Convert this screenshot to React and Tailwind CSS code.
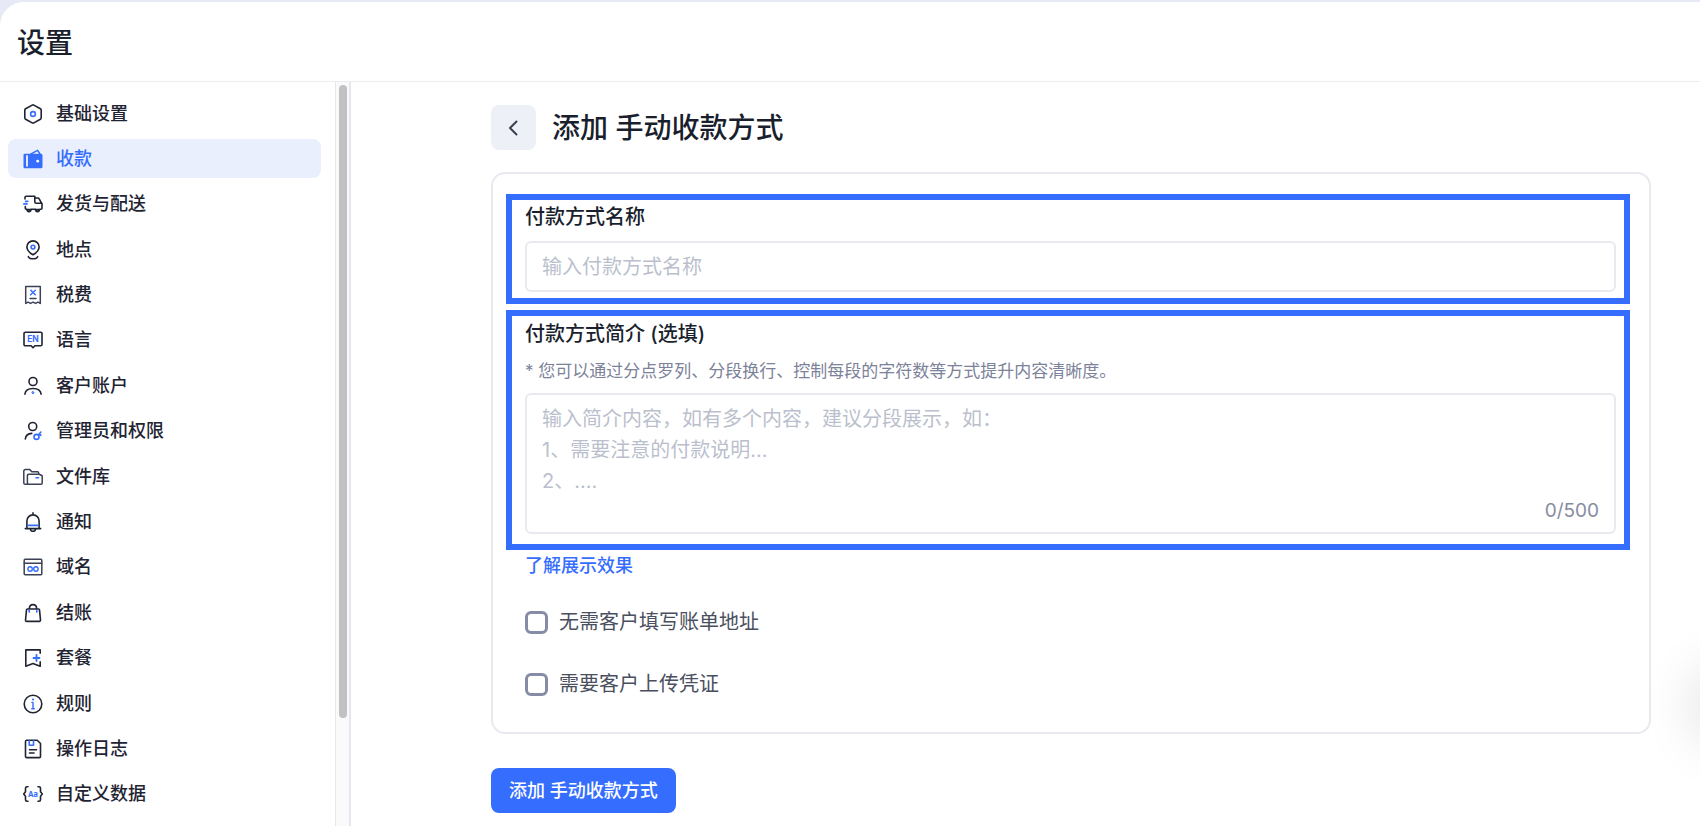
import React, { useState } from "react";

const INK = "#1f2433";
const BLUE = "#356dff";

function Icon({ children }) {
  return (
    <svg
      viewBox="0 0 20 20"
      className="size-5 shrink-0"
      fill="none"
      stroke={INK}
      strokeWidth="1.6"
      strokeLinecap="round"
      strokeLinejoin="round"
      aria-hidden="true"
    >
      {children}
    </svg>
  );
}

const items = [
  {
    label: "基础设置",
    icon: (
      <>
        <path d="M9.2 1.1a1.6 1.6 0 0 1 1.6 0l6.6 3.7a1.6 1.6 0 0 1 .8 1.4v7.6a1.6 1.6 0 0 1-.8 1.4l-6.6 3.7a1.6 1.6 0 0 1-1.6 0l-6.6-3.7a1.6 1.6 0 0 1-.8-1.4V6.2a1.6 1.6 0 0 1 .8-1.4z" />
        <circle cx="10" cy="10" r="2.4" stroke={BLUE} />
      </>
    ),
  },
  {
    label: "收款",
    active: true,
    icon: (
      <>
        <path d="M8 4.8 14.6 1.400 17 5" stroke={BLUE} strokeWidth="1.5" />
        <path d="M1.800 4.800h16.200a1.500 1.500 0 0 1 1.500 1.500v11.400a1.500 1.500 0 0 1-1.500 1.500H1.800A1.300 1.300 0 0 1 .5 17.900V6.100a1.300 1.300 0 0 1 1.300-1.300z" fill={BLUE} stroke="none" />
        <path d="M4 6.300v11.200" stroke="#fff" strokeWidth="1.700" strokeLinecap="butt" />
        <circle cx="14.700" cy="12.200" r="1.400" fill="#fff" stroke="none" />
      </>
    ),
  },
  {
    label: "发货与配送",
    icon: (
      <>
        <path d="M2 5V3.500A1.300 1.300 0 0 1 3.300 2.200h8.500v5.600a1.400 1.400 0 0 0 1.400 1.400H18M11.800 4h3a1.600 1.600 0 0 1 1.400.9l1.900 3.500.6.600a1 1 0 0 1 .3.700v4.600a1 1 0 0 1-1 1h-1M8.300 15.300h4M2.300 12.500v1.800a1 1 0 0 0 1 1h.5" />
        <path d="M4 15.600a2 2 0 0 0 4 0zM12.500 15.600a2 2 0 0 0 4 0z" />
        <path d="M2.600 7.300h2.200M.8 9.900H4" stroke={BLUE} strokeWidth="1.700" />
      </>
    ),
  },
  {
    label: "地点",
    icon: (
      <>
        <path d="M10 14.800C6.400 12.700 3.900 10.300 3.900 7a6.100 6.100 0 0 1 12.200 0c0 3.300-2.500 5.700-6.100 7.800z" />
        <path d="M5.300 16.700c1 2.700 8.400 2.700 9.400 0" />
        <circle cx="10" cy="7.100" r="1.900" stroke={BLUE} />
      </>
    ),
  },
  {
    label: "税费",
    icon: (
      <>
        <path d="M2.700 1.600h14.600v16.800l-2.400-1.300-2.400 1.300-2.500-1.300-2.500 1.300-2.400-1.300-2.400 1.300zM7 13.500h6" stroke="#3b4156" strokeWidth="1.500" />
        <path d="M7.600 9.800l4.800-4.600" stroke={BLUE} strokeWidth="1.400" />
        <path d="M8 5.400l1.300 1.300M10.800 8.300l1.400 1.400" stroke={BLUE} strokeWidth="1.600" />
      </>
    ),
  },
  {
    label: "语言",
    icon: (
      <>
        <path d="M2.300 2.200h15.400A1.300 1.300 0 0 1 19 3.500v11a1.300 1.300 0 0 1-1.300 1.300h-5.800L10 17.700l-1.900-1.900H2.300A1.300 1.300 0 0 1 1 14.500v-11a1.300 1.300 0 0 1 1.300-1.300z" />
        <text x="10" y="12" textAnchor="middle" className="font-['Inter'] font-bold" fontSize="8.500" fill={BLUE} stroke="none">
          EN
        </text>
      </>
    ),
  },
  {
    label: "客户账户",
    icon: (
      <>
        <circle cx="10" cy="5.500" r="4" />
        <path d="M1.900 18.200c.5-3.800 3.800-5.700 8.100-5.700s7.600 1.900 8.100 5.700" />
        <path d="M10 15.400l1 1.300-1 1.300-1-1.300z" fill={BLUE} stroke={BLUE} strokeWidth=".8" />
      </>
    ),
  },
  {
    label: "管理员和权限",
    icon: (
      <>
        <circle cx="9.700" cy="5.500" r="4" />
        <path d="M2.300 18c.3-3.400 2.700-5.300 6.500-5.600" />
        <circle cx="13.500" cy="15.900" r="2.500" stroke={BLUE} />
        <path d="M15.300 14l2.600-3M16.300 12.800l1.600 1.500" stroke={BLUE} />
      </>
    ),
  },
  {
    label: "文件库",
    icon: (
      <>
        <path d="M4.500 17.300H2.200A1.400 1.400 0 0 1 .8 15.900V3.900a1.400 1.400 0 0 1 1.400-1.400h4.600l2 2.300h5.500a1.400 1.400 0 0 1 1.400 1.400v1" stroke="#3b4156" strokeWidth="1.500" />
        <path d="M5.600 7.300h10.600l3 1.400v7.400a1.200 1.200 0 0 1-1.200 1.200H5.600a1.200 1.200 0 0 1-1.200-1.200V8.500a1.200 1.200 0 0 1 1.200-1.200z" stroke="#3b4156" strokeWidth="1.500" />
        <path d="M13 10.800h2.500" stroke={BLUE} />
      </>
    ),
  },
  {
    label: "通知",
    icon: (
      <>
        <path d="M3.900 16V9a6.100 6.100 0 0 1 12.200 0v7M10 .9v1.800M2.300 16.600h15.400M7.300 17.200c.6 2.900 4.800 2.900 5.400 0" />
        <path d="M4.900 13.400h10.200" stroke={BLUE} />
      </>
    ),
  },
  {
    label: "域名",
    icon: (
      <>
        <rect x="1.200" y="2.200" width="17.600" height="15.600" rx="1" stroke="#3b4156" strokeWidth="1.500" />
        <path d="M1.200 6.300h17.600" stroke="#3b4156" strokeWidth="1.500" />
        <circle cx="7.100" cy="12" r="2.200" stroke={BLUE} strokeWidth="1.400" />
        <circle cx="12.900" cy="12" r="2.200" stroke={BLUE} strokeWidth="1.400" />
      </>
    ),
  },
  {
    label: "结账",
    icon: (
      <>
        <path d="M4.500 6h11a1 1 0 0 1 1 .9l1 10.300a1.100 1.100 0 0 1-1.100 1.200H3.600a1.100 1.100 0 0 1-1.100-1.200l1-10.300a1 1 0 0 1 1-.9zM6.300 5.700C6.500.2 13.500.2 13.700 5.700" />
        <path d="M6.200 7.200v1.900M13.800 7.200v1.900" stroke={BLUE} />
      </>
    ),
  },
  {
    label: "套餐",
    icon: (
      <>
        <path d="M17.200 5.300V1.900H2.800v16.300L10 15.500l7.200 2.700v-4.300" />
        <path d="M13.500 7v6M10.500 10h6" stroke={BLUE} strokeWidth="1.800" />
      </>
    ),
  },
  {
    label: "规则",
    icon: (
      <>
        <circle cx="10" cy="10" r="8.800" />
        <path d="M8.900 8.400H10v6.100M8.700 14.700h2.600" stroke={BLUE} strokeWidth="1.400" />
        <circle cx="10" cy="5.500" r="1.100" fill={BLUE} stroke="none" />
      </>
    ),
  },
  {
    label: "操作日志",
    icon: (
      <>
        <path d="M3.500 1.300h10.700l3.300 3.200v13a1.100 1.100 0 0 1-1.100 1.100H3.600a1.100 1.100 0 0 1-1.100-1.100v-15a1.200 1.200 0 0 1 1-1.200zM6.500 10.700h7M6.500 14h4.500" />
        <path d="M6.200 1.800v4.500h4.300V1.800" stroke={BLUE} />
      </>
    ),
  },
  {
    label: "自定义数据",
    icon: (
      <>
        <path d="M5 2.800H4a1.500 1.500 0 0 0-1.500 1.500v3.500L.7 10l1.800 2.200v3.500A1.500 1.500 0 0 0 4 17.200h1M15 2.800h1a1.500 1.500 0 0 1 1.500 1.500v3.500l1.800 2.200-1.800 2.200v3.500a1.500 1.500 0 0 1-1.500 1.500h-1" />
        <text x="10" y="12.700" textAnchor="middle" className="font-['Inter'] font-bold" fontSize="7.500" fill={BLUE} stroke="none">
          Aa
        </text>
      </>
    ),
  },
];

function Sidebar() {
  return (
    <aside className="flex w-[351px] shrink-0 border-r-2 border-[#e6e7ee]">
      <nav aria-label="设置" className="min-w-0 flex-1 pt-3 pr-[14px] pb-3 pl-2">
        <ul className="flex h-full flex-col justify-between">
          {items.map((item) => (
            <li key={item.label}>
              <a
                href="#"
                aria-current={item.active ? "page" : undefined}
                className={
                  "flex h-[39px] items-center gap-[13px] rounded-lg pl-[15px] text-lg font-medium " +
                  (item.active ? "bg-[#e9effd] text-[#356dff]" : "text-[#1f2433]")
                }
              >
                <Icon>{item.icon}</Icon>
                {item.label}
              </a>
            </li>
          ))}
        </ul>
      </nav>
      <div className="w-[14px] border-l border-[#e8e8e8] bg-[#fafafa] px-[3px] pt-[3px]" aria-hidden="true">
        <div className="h-[633px] w-2 rounded-full bg-[#c1c1c1]" />
      </div>
    </aside>
  );
}

const checkboxClass =
  "size-[23px] shrink-0 appearance-none rounded-md border-[3px] border-[#868ca6] bg-white checked:border-[#356dff] checked:bg-[#356dff]";

export default function App() {
  const [intro, setIntro] = useState("");

  return (
    <div className="h-screen overflow-hidden bg-[#e8e9f6] pt-[2px] font-[Inter,'Noto_Sans_CJK_SC',sans-serif] text-[#1a1f2e]">
      <div className="relative flex h-full flex-col overflow-hidden rounded-tl-[24px] bg-white">
        <header className="flex h-20 shrink-0 items-center border-b border-[#ebecf0] pt-[2px] pl-[17px]">
          <h1 className="text-[28px] leading-10 font-medium">设置</h1>
        </header>

        <div className="flex min-h-0 flex-1">
          <Sidebar />

          <main className="min-w-0 flex-1 pt-[23px] pr-[49px] pl-[140px]">
            <div className="flex items-center gap-4">
              <button
                type="button"
                aria-label="返回"
                className="flex size-[45px] items-center justify-center rounded-lg bg-[#eef0f8]"
              >
                <svg viewBox="0 0 12 16" className="h-4 w-3" fill="none" stroke="#3a3f52" strokeWidth="2" strokeLinecap="round" strokeLinejoin="round" aria-hidden="true">
                  <path d="M8.500 1.500 2 8l6.500 6.500" />
                </svg>
              </button>
              <h2 className="text-[28px] leading-10 font-medium">添加 手动收款方式</h2>
            </div>

            <form onSubmit={(e) => e.preventDefault()}>
              <div className="mt-[22px] rounded-[14px] border-2 border-[#e9eaf0] pt-5 pr-[19px] pb-[34px] pl-[13px]">
                <div className="border-6 border-[#356dff] pt-[3px] pr-2 pb-[6px] pl-[13px]">
                  <label htmlFor="name" className="mb-[10px] block text-xl leading-7 font-medium">
                    付款方式名称
                  </label>
                  <input
                    id="name"
                    type="text"
                    placeholder="输入付款方式名称"
                    className="block h-[51px] w-full rounded-md border-2 border-[#e9eaf0] px-[15px] text-xl outline-none placeholder:text-[#bbbfcd]"
                  />
                </div>

                <div className="mt-[6px] border-6 border-[#356dff] pt-1 pr-2 pb-[10px] pl-[13px]">
                  <label htmlFor="intro" className="block text-xl leading-7 font-medium">
                    付款方式简介 (选填)
                  </label>
                  <p id="intro-hint" className="mt-[11px] mb-[10px] text-[17px] leading-6 text-[#7c8299]">
                    * 您可以通过分点罗列、分段换行、控制每段的字符数等方式提升内容清晰度。
                  </p>
                  <div className="flex h-[141px] flex-col rounded-md border-2 border-[#e9eaf0] px-[15px] pt-[9px]">
                    <textarea
                      id="intro"
                      aria-describedby="intro-hint"
                      maxLength={500}
                      value={intro}
                      onChange={(e) => setIntro(e.target.value)}
                      placeholder={"输入简介内容，如有多个内容，建议分段展示，如：\n1、需要注意的付款说明...\n2、...."}
                      className="block h-[93px] w-full resize-none text-xl leading-[31px] outline-none placeholder:text-[#bbbfcd]"
                    />
                    <div className="text-right text-[19px] leading-7 text-[#868ca0]">{intro.length}/500</div>
                  </div>
                </div>

                <div className="pl-[19px]">
                  <a href="#" className="mt-1 block w-fit text-lg leading-6 font-medium text-[#356dff]">
                    了解展示效果
                  </a>
                  <div className="mt-[30px] flex flex-col gap-[34px]">
                    <label className="flex items-center gap-[11px] text-xl leading-7 text-[#4a4f60]">
                      <input type="checkbox" className={checkboxClass} />
                      无需客户填写账单地址
                    </label>
                    <label className="flex items-center gap-[11px] text-xl leading-7 text-[#4a4f60]">
                      <input type="checkbox" className={checkboxClass} />
                      需要客户上传凭证
                    </label>
                  </div>
                </div>
              </div>

              <button
                type="submit"
                className="mt-[34px] h-[45px] rounded-lg bg-[#356dff] px-[18px] text-lg font-medium text-white"
              >
                添加 手动收款方式
              </button>
            </form>
          </main>
        </div>

        <div
          className="absolute top-[674px] left-full size-[60px] rounded-full bg-white shadow-[0_0_60px_rgba(0,0,0,0.2)]"
          aria-hidden="true"
        />
      </div>
    </div>
  );
}
